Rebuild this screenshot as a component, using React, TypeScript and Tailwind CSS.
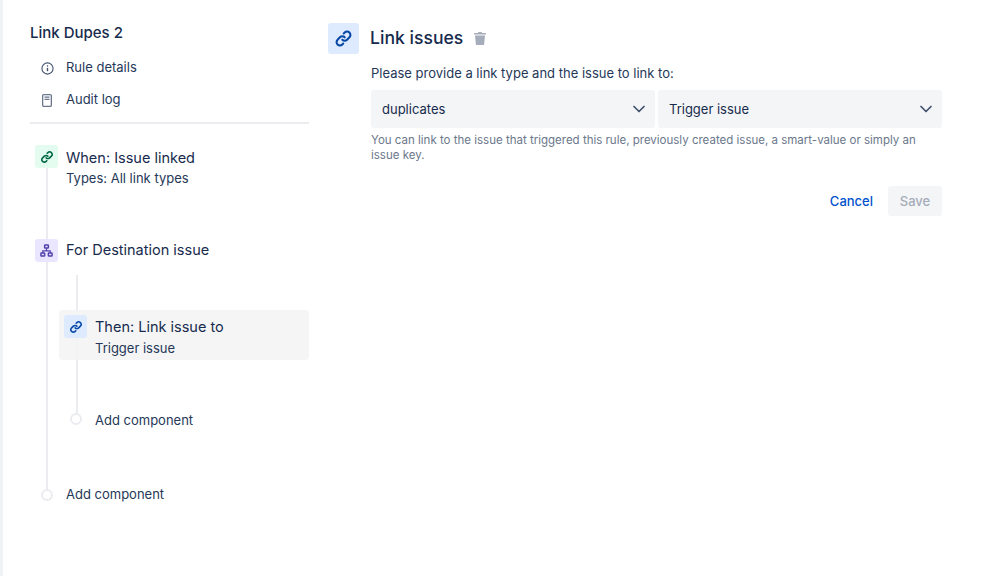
import React from "react";

const LinkGlyph = ({ className }: { className: string }) => (
  <svg viewBox="0 0 24 24" fill="none" stroke="currentColor" strokeWidth="2.6" strokeLinecap="round" strokeLinejoin="round" className={className}>
    <path d="M10.5 13.5a4.2 4.2 0 0 0 6 0l3-3a4.2 4.2 0 0 0-6-6l-1.2 1.2" />
    <path d="M13.5 10.5a4.2 4.2 0 0 0-6 0l-3 3a4.2 4.2 0 0 0 6 6l1.2-1.2" />
  </svg>
);

const Chevron = () => (
  <svg viewBox="0 0 12 8" fill="none" stroke="currentColor" strokeWidth="1.7" strokeLinecap="round" strokeLinejoin="round" className="w-[12px] h-[8px] text-[#42526e]">
    <path d="M1 1.5l5 5 5-5" />
  </svg>
);

const Select = ({ label }: { label: string }) => (
  <div className="flex-1 h-[38px] bg-[#f4f5f7] rounded-[3px] flex items-center justify-between pl-[11px] pr-[10px] text-[13px] text-[#172b4d]">
    <span className="pt-[1px]">{label}</span>
    <Chevron />
  </div>
);

export default function App() {
  return (
    <div className="w-[999px] h-[576px] bg-white overflow-hidden flex font-['Inter',sans-serif] text-[#172b4d] antialiased border-l-[3px] border-[#f1f2f4]">
      <aside className="w-[306px] shrink-0 pl-[27px] pt-[23px]">
        <h1 className="text-[15px] leading-[20px] font-medium">Link Dupes 2</h1>
        <div className="mt-[15px] flex items-center h-[20px] text-[13px] text-[#253858]">
          <span className="w-[34px] mr-[2px] flex justify-center text-[#42526e]">
            <svg viewBox="0 0 14 14" className="w-[13px] h-[13px]" fill="none" stroke="currentColor" strokeWidth="1.2">
              <circle cx="7" cy="7" r="6" />
              <path d="M7 6.3v3.6" strokeWidth="1.5" />
              <circle cx="7" cy="4.2" r="0.8" fill="currentColor" stroke="none" />
            </svg>
          </span>
          Rule details
        </div>
        <div className="mt-[12px] flex items-center h-[20px] text-[13px] text-[#253858]">
          <span className="w-[34px] mr-[2px] flex justify-center text-[#6b778c]">
            <svg viewBox="0 0 10 13" className="w-[10px] h-[13px]" fill="none" stroke="currentColor" strokeWidth="1.3">
              <rect x="0.65" y="0.65" width="8.7" height="11.7" rx="1.2" />
              <path d="M2.5 3.2h5M2.5 5.4h5" strokeWidth="1.2" />
            </svg>
          </span>
          Audit log
        </div>
        <div className="mt-[12px] h-[2px] w-[279px] bg-[#ebecf0]" />

        <div className="relative mt-[21px] w-[279px]">
          <div className="absolute left-[15.5px] top-[20px] h-[325px] w-[2px] bg-[#ebecf0]" />

          <div className="relative flex pl-[5px]">
            <div className="w-[23px] h-[23px] rounded-[3px] bg-[#e3fcef] flex items-center justify-center text-[#006644]">
              <LinkGlyph className="w-[14px] h-[14px]" />
            </div>
            <div className="ml-[8px] pt-[1px]">
              <div className="text-[14.5px] leading-[24px]">When: Issue linked</div>
              <div className="text-[13px] leading-[17px] text-[#253858]">Types: All link types</div>
            </div>
          </div>

          <div className="relative flex pl-[5px] mt-[51px] items-center">
            <div className="w-[23px] h-[23px] rounded-[3px] bg-[#eae6ff] flex items-center justify-center text-[#5243aa]">
              <svg viewBox="0 0 14 14" className="w-[13px] h-[13px]" fill="none" stroke="currentColor" strokeWidth="1.6">
                <rect x="5" y="1" width="4" height="3.4" rx="0.6" />
                <rect x="1" y="9.6" width="4" height="3.4" rx="0.6" />
                <rect x="9" y="9.6" width="4" height="3.4" rx="0.6" />
                <path d="M7 4.4v3M3 9.6V7.4h8v2.2" strokeWidth="1.3" />
              </svg>
            </div>
            <div className="ml-[8px] text-[14.5px] leading-[24px]">For Destination issue</div>
          </div>

          <div className="relative ml-[29px] mt-[48px]">
            <div className="absolute left-[17px] top-[-35px] h-[140px] w-[2px] bg-[#ebecf0]" />
            <div className="relative flex rounded-[4px] bg-[#f4f4f5]/90 h-[50px] pl-[5px] pt-[5px]">
              <div className="w-[23px] h-[23px] rounded-[3px] bg-[#deebff] flex items-center justify-center text-[#0747a6]">
                <LinkGlyph className="w-[14px] h-[14px]" />
              </div>
              <div className="ml-[8px]">
                <div className="text-[14.5px] leading-[24px]">Then: Link issue to</div>
                <div className="text-[13px] leading-[18px] text-[#253858]">Trigger issue</div>
              </div>
            </div>
            <div className="relative flex items-center mt-[51px] h-[20px] pl-[11px]">
              <span className="w-[12px] h-[12px] mb-[4px] rounded-full border-2 border-[#ebecf0] bg-white" />
              <span className="ml-[13px] text-[13px] text-[#253858]">Add component</span>
            </div>
          </div>

          <div className="relative flex items-center mt-[54px] h-[20px] pl-[11px]">
            <span className="w-[12px] h-[12px] rounded-full border-2 border-[#ebecf0] bg-white" />
            <span className="ml-[13px] text-[13px] text-[#253858]">Add component</span>
          </div>
        </div>
      </aside>

      <main className="ml-[19px] w-[614px] pt-[23px]">
        <div className="flex items-center h-[31px]">
          <div className="w-[31px] h-[31px] rounded-[3px] bg-[#deebff] flex items-center justify-center text-[#0747a6]">
            <LinkGlyph className="w-[19px] h-[19px]" />
          </div>
          <h2 className="ml-[11px] mb-[1px] text-[17.6px] font-medium leading-[24px]">Link issues</h2>
          <svg viewBox="0 0 12 13" className="ml-[11px] w-[12px] h-[13px] text-[#a5adba]" fill="currentColor">
            <path d="M4.5 0h3l.6 1H11.500a.5.5 0 0 1 .5.5V2.500H0V1.500a.5.5 0 0 1 .5-.5h3.400z" />
            <path d="M1 3.500h10l-.8 8.600a1 1 0 0 1-1 .9H2.800a1 1 0 0 1-1-.9z" />
          </svg>
        </div>
        <div className="ml-[43px]">
          <p className="mt-[9px] text-[13px] leading-[20px] text-[#253858]">Please provide a link type and the issue to link to:</p>
          <div className="mt-[7px] flex gap-[3px] w-[571px]">
            <Select label="duplicates" />
            <Select label="Trigger issue" />
          </div>
          <p className="mt-[5px] w-[571px] text-[11.5px] leading-[15px] text-[#6b778c]">
            You can link to the issue that triggered this rule, previously created issue, a smart-value or simply an issue key.
          </p>
          <div className="mt-[23px] w-[571px] flex justify-end items-center">
            <button className="pt-[1px] text-[13px] font-medium text-[#0052cc]">Cancel</button>
            <button className="ml-[15px] w-[54px] h-[30px] pt-[1px] rounded-[3px] bg-[#f4f5f7] text-[13px] font-medium text-[#a5adba]">Save</button>
          </div>
        </div>
      </main>
    </div>
  );
}
